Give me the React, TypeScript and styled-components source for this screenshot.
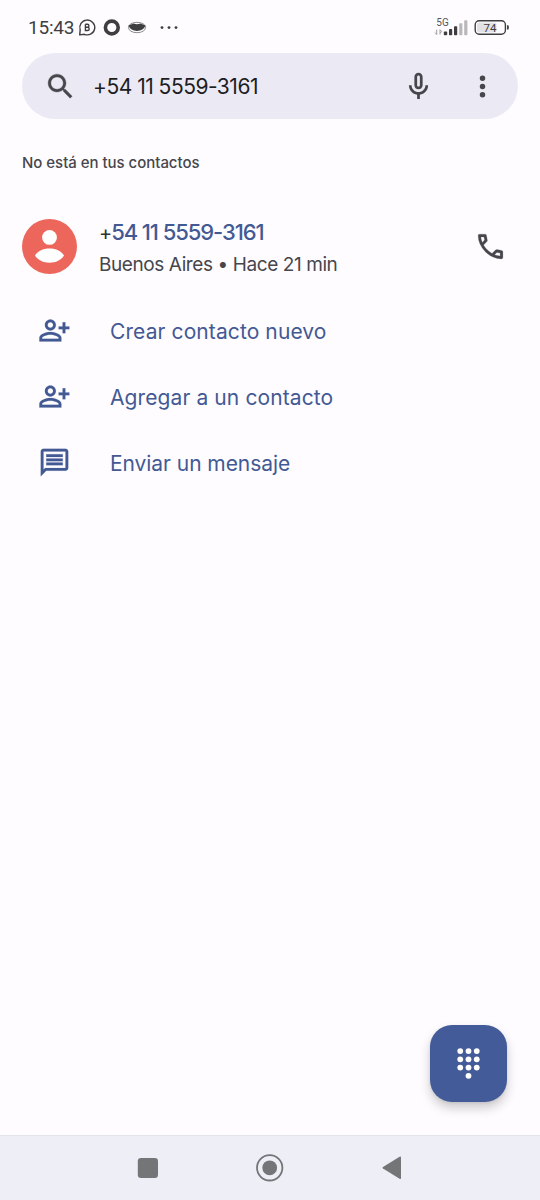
import React from 'react';
import styled, { createGlobalStyle } from 'styled-components';

const GlobalStyle = createGlobalStyle`
  *, *::before, *::after { box-sizing: border-box; }
  body { margin: 0; background: #fefcff; }
  svg { display: block; flex: none; }
`;

const Screen = styled.div`
  width: 540px;
  height: 1200px;
  display: flex;
  flex-direction: column;
  background: #fefcff;
  color: #46464c;
  font-family: Inter, Roboto, sans-serif;
  overflow: hidden;
`;

const StatusBar = styled.header`
  height: 53px;
  padding: 2px 31px 0 28px;
  display: flex;
  align-items: center;
  justify-content: space-between;
  color: #3e3e41;
`;

const StatusGroup = styled.div`
  display: flex;
  align-items: center;
`;

const Clock = styled.span`
  width: 50px;
  padding-top: 1px;
  font: 400 19px/22px Roboto, sans-serif;
  letter-spacing: -0.2px;
`;

const SearchBar = styled.div`
  height: 66px;
  margin: 0 22px;
  padding: 0 19px 0 22px;
  display: flex;
  align-items: center;
  border-radius: 33px;
  background: #ebeaf4;
`;

const Query = styled.span`
  flex: 1;
  margin-left: 16px;
  padding-top: 1px;
  color: #1d1d22;
  font-size: 21px;
  line-height: 28px;
  letter-spacing: -0.5px;
`;

const MenuSlot = styled.div`
  margin-left: 31px;
`;

const SectionLabel = styled.h2`
  margin: 0;
  padding: 34px 22px 0;
  font-size: 15px;
  line-height: 20px;
  font-weight: 500;
  letter-spacing: -0.03px;
`;

const ContactRow = styled.section`
  height: 125px;
  padding: 22px 33px 0 22px;
  display: flex;
  align-items: center;
`;

const ContactText = styled.div`
  flex: 1;
  margin-left: 22px;
  padding-top: 2px;
`;

const PhoneNumber = styled.div`
  color: #435994;
  font-size: 22px;
  line-height: 32px;
  font-weight: 500;
  letter-spacing: -1.08px;
`;

const Prefix = styled.span`
  color: #303035;
  font-size: 20px;
  font-weight: 400;
`;

const Detail = styled.div`
  font-size: 19px;
  line-height: 31px;
  letter-spacing: -0.41px;
`;

const Actions = styled.nav`
  flex: 1;
  display: flex;
  flex-direction: column;
`;

const Action = styled.a`
  height: 66px;
  padding: 0 0 1px 38px;
  display: flex;
  align-items: center;
  gap: 39px;
  color: #435994;
`;

const ActionLabel = styled.span<{ $spacing: number }>`
  padding-top: 3px;
  font-size: 21px;
  line-height: 28px;
  letter-spacing: ${({ $spacing }) => $spacing}px;
`;

const FabArea = styled.div`
  display: flex;
  justify-content: flex-end;
  padding: 0 33px 33px 0;
`;

const Fab = styled.button`
  width: 77px;
  height: 77px;
  padding: 0;
  border: 0;
  border-radius: 22px;
  display: flex;
  align-items: center;
  justify-content: center;
  background: #435b98;
  color: #fff;
  box-shadow: 0 6px 11px rgba(0, 0, 0, 0.2), 0 1px 3px rgba(0, 0, 0, 0.08);
`;

const NavBar = styled.footer`
  height: 65px;
  padding: 0 134px 1px 132px;
  display: flex;
  align-items: center;
  justify-content: space-between;
  border-top: 1px solid #e3e4ea;
  background: #edeef6;
  color: #747577;
`;

const PATHS = {
  search:
    'M15.5 14h-.79l-.28-.27C15.41 12.59 16 11.11 16 9.5 16 5.91 13.09 3 9.5 3S3 5.91 3 9.5 5.91 16 9.5 16c1.61 0 3.09-.59 4.23-1.57l.27.28v.79l5 4.99L20.49 19l-4.99-5zm-6 0C7.01 14 5 11.99 5 9.5S7.01 5 9.5 5 14 7.01 14 9.5 11.99 14 9.5 14z',
  mic:
    'M12 14c1.66 0 3-1.34 3-3V5c0-1.66-1.34-3-3-3S9 3.34 9 5v6c0 1.66 1.34 3 3 3zm-1-9c0-.55.45-1 1-1s1 .45 1 1v6c0 .55-.45 1-1 1s-1-.45-1-1V5zm6 6c0 2.76-2.24 5-5 5s-5-2.24-5-5H5c0 3.53 2.61 6.43 6 6.92V21h2v-3.08c3.39-.49 6-3.39 6-6.92h-2z',
  more:
    'M12 8a2 2 0 1 0 0-4 2 2 0 0 0 0 4zm0 6a2 2 0 1 0 0-4 2 2 0 0 0 0 4zm0 6a2 2 0 1 0 0-4 2 2 0 0 0 0 4z',
  call:
    'M19.95 21q-3.125 0-6.175-1.362t-5.55-3.863-3.862-5.55T3 4.05q0-.45.3-.75t.75-.3H8.1q.35 0 .625.238t.325.562l.65 3.5q.05.4-.025.675T9.4 8.45L6.975 10.9q.5.925 1.187 1.787t1.513 1.663q.775.775 1.625 1.438T13.1 17l2.35-2.35q.225-.225.588-.337t.712-.063l3.45.7q.35.1.575.363T21 15.9v4.05q0 .45-.3.75t-.75.3M6.025 9l1.65-1.65L7.25 5H5.025q.125 1.025.35 2.025T6.025 9m8.95 8.95q.975.425 1.988.675T19 18.95v-2.2l-2.35-.475z',
  personAdd:
    'M9 12c2.21 0 4-1.79 4-4s-1.79-4-4-4-4 1.79-4 4 1.79 4 4 4zm0-6c1.1 0 2 .9 2 2s-.9 2-2 2-2-.9-2-2 .9-2 2-2zm0 7c-2.67 0-8 1.34-8 4.2V20h16v-2.8c0-2.86-5.33-4.2-8-4.2zm6 5H3v-.8C3.22 16.3 6.31 15 9 15s5.8 1.3 6 2.2zM17.9 6v3H15v2h2.9v3h2v-3h2.9V9h-2.9V6z',
  chat:
    'M4 4h16v12H5.17L4 17.17V4m0-2c-1.1 0-1.99.9-1.99 2L2 22l4-4h14c1.1 0 2-.9 2-2V4c0-1.1-.9-2-2-2H4zm2 10h12v2H6v-2zm0-3h12v2H6V9zm0-3h12v2H6V6z',
};

const Icon = ({ name, weight = 0 }: { name: keyof typeof PATHS; weight?: number }) => (
  <svg width="33" height="33" viewBox="0 0 24 24" fill="currentColor" stroke="currentColor" strokeWidth={weight}>
    <path d={PATHS[name]} />
  </svg>
);

const Notifications = () => (
  <svg width="104" height="20" viewBox="78 18 104 20" fill="none" stroke="currentColor">
    <path d="M79.7 34.9l.5-5A7.5 7.4 0 1 1 84.4 34.3z" strokeWidth="1.4" strokeLinejoin="round" />
    <path d="M85.4 24.3v6.200h2.200a1.600 1.600 0 0 0 0-3.200h-2.200m0-3h2a1.500 1.500 0 0 1 0 3" strokeWidth="1.4" />
    <circle cx="111.8" cy="27.5" r="6.4" strokeWidth="3.6" />
    <ellipse cx="137" cy="27.5" rx="8.6" ry="5.2" strokeWidth="0.8" opacity="0.75" />
    <path d="M128.4 25.6q2.6-1.4 5.2-2.2 3.400 1.600 6.800 0 2.600.8 5.200 2.200-2.200 5.300-8.600 5.500-6.400-.2-8.600-5.500z" fill="currentColor" stroke="none" />
    <g fill="currentColor" stroke="none">
      <circle cx="162" cy="27.6" r="1.45" />
      <circle cx="169" cy="27.6" r="1.45" />
      <circle cx="176" cy="27.6" r="1.45" />
    </g>
  </svg>
);

const Signal = () => (
  <svg width="75" height="22" viewBox="434 17 75 22" fill="currentColor">
    <text x="436.3" y="26" fontFamily="Roboto, sans-serif" fontSize="10" fill="#555558">5G</text>
    <path d="M436.7 34.5v-4.8M435 32.6l1.7 1.9M440 34.5v-4.8l1.8 1.8-1.8 1.6" fill="none" stroke="#929296" strokeWidth="0.9" />
    <rect x="443.8" y="31.6" width="3.4" height="3.6" rx="0.8" />
    <rect x="449" y="29" width="3.2" height="6.2" rx="0.8" />
    <rect x="454" y="26.2" width="3.2" height="9" rx="0.8" />
    <rect x="459.2" y="23.2" width="3.2" height="12" rx="0.8" fill="#b8b8bc" />
    <rect x="464.2" y="20.2" width="3.2" height="15" rx="0.8" fill="#b8b8bc" />
    <rect x="477" y="22.5" width="19.5" height="10" rx="2" fill="#e2e2e5" />
    <rect x="475.2" y="20.7" width="30.2" height="13.6" rx="4" fill="none" stroke="currentColor" strokeWidth="1.4" />
    <path d="M507 25.2h.6a1.2 1.2 0 0 1 1.2 1.2v2a1.2 1.2 0 0 1-1.2 1.2h-.6z" />
    <text x="490" y="31.8" textAnchor="middle" fontFamily="Roboto, sans-serif" fontSize="11.5">74</text>
  </svg>
);

const Avatar = () => (
  <svg width="55" height="55" viewBox="0 0 55 55">
    <circle cx="27.5" cy="27.5" r="27.5" fill="#ed665b" />
    <circle cx="27.5" cy="18.4" r="7.4" fill="#fff" />
    <path d="M13 36.6C15.4 32 20.8 29.4 27.5 29.4S39.6 32 42 36.6c-2.8 4.6-8.2 7.2-14.5 7.2S15.8 41.2 13 36.6z" fill="#fff" />
  </svg>
);

const DIALPAD_DOTS = [
  [0, 0], [1, 0], [2, 0],
  [0, 1], [1, 1], [2, 1],
  [0, 2], [1, 2], [2, 2],
  [1, 3],
];

const Dialpad = () => (
  <svg width="33" height="33" viewBox="0 0 33 33" fill="currentColor">
    {DIALPAD_DOTS.map(([col, row]) => (
      <circle key={`${col}-${row}`} cx={8.25 + col * 8.25} cy={4.1 + row * 8.25} r="2.9" />
    ))}
  </svg>
);

const ACTIONS: { icon: keyof typeof PATHS; label: string; spacing: number }[] = [
  { icon: 'personAdd', label: 'Crear contacto nuevo', spacing: 0.1 },
  { icon: 'personAdd', label: 'Agregar a un contacto', spacing: 0.1 },
  { icon: 'chat', label: 'Enviar un mensaje', spacing: -0.06 },
];

export default function App() {
  return (
    <>
      <GlobalStyle />
      <Screen>
        <StatusBar>
          <StatusGroup>
            <Clock>15:43</Clock>
            <Notifications />
          </StatusGroup>
          <Signal />
        </StatusBar>
        <SearchBar>
          <Icon name="search" weight={0.25} />
          <Query>+54 11 5559-3161</Query>
          <Icon name="mic" />
          <MenuSlot>
            <Icon name="more" />
          </MenuSlot>
        </SearchBar>
        <SectionLabel>No está en tus contactos</SectionLabel>
        <ContactRow>
          <Avatar />
          <ContactText>
            <PhoneNumber>
              <Prefix>+</Prefix>54 11 5559-3161
            </PhoneNumber>
            <Detail>Buenos Aires • Hace 21 min</Detail>
          </ContactText>
          <Icon name="call" weight={0.15} />
        </ContactRow>
        <Actions>
          {ACTIONS.map(({ icon, label, spacing }) => (
            <Action key={label}>
              <Icon name={icon} weight={0.1} />
              <ActionLabel $spacing={spacing}>{label}</ActionLabel>
            </Action>
          ))}
        </Actions>
        <FabArea>
          <Fab aria-label="Teclado">
            <Dialpad />
          </Fab>
        </FabArea>
        <NavBar>
          <svg width="32" height="32" viewBox="0 0 32 32" fill="currentColor">
            <rect x="5.8" y="6" width="20.2" height="20" rx="3.2" />
          </svg>
          <svg width="32" height="32" viewBox="0 0 32 32" fill="currentColor">
            <circle cx="16.7" cy="15.8" r="12.7" fill="none" stroke="currentColor" strokeWidth="1.8" />
            <circle cx="16.7" cy="15.8" r="7.4" />
          </svg>
          <svg width="32" height="32" viewBox="0 0 32 32" fill="currentColor">
            <path d="M9 15 25.6 4.7q1.4-.6 1.4.8V26q0 1.400-1.400.7L9 16.600q-1.200-.8 0-1.600z" />
          </svg>
        </NavBar>
      </Screen>
    </>
  );
}
